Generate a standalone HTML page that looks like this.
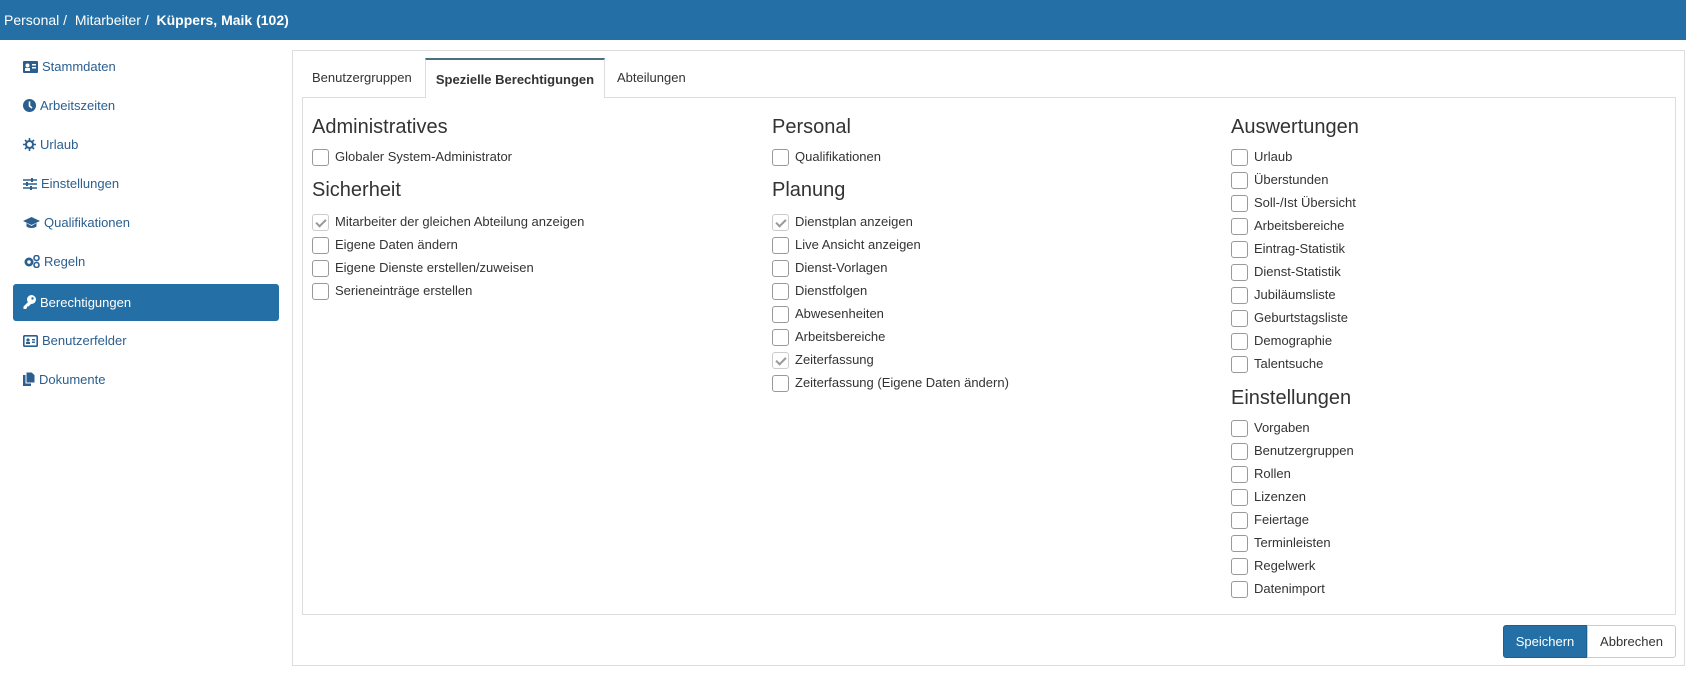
<!DOCTYPE html>
<html><head><meta charset="utf-8"><style>
*{box-sizing:border-box;margin:0;padding:0}
body{width:1686px;height:679px;overflow:hidden;background:#fff;font-family:"Liberation Sans",Arial,sans-serif;font-size:13px;color:#333;position:relative}
.hdr{position:absolute;left:0;top:0;width:1686px;height:40px;background:#2470a6;color:#fff;font-size:14px;line-height:40px;padding-left:4px}
.hdr b{font-weight:bold}
.nav{position:absolute;left:13px;width:266px;height:37px;line-height:37px;padding-left:10px;color:#2a5f8f;font-size:13px}
.nav.act{background:#2470a6;color:#fff;border-radius:3px}
.nav svg{vertical-align:-2px;margin-right:4px}
.outer{position:absolute;left:292px;top:50px;width:1393px;height:616px;border:1px solid #ddd}
.tabline{position:absolute;left:302px;top:97px;width:1374px;height:518px;border:1px solid #ddd}
.tab{position:absolute;top:58px;height:40px;line-height:40px;font-size:13px;color:#333}
.tab.act{background:#fff;border:1px solid #ddd;border-top:2px solid #4a7080;border-bottom:none;font-weight:bold;color:#333;text-align:center}
h3{position:absolute;font-size:20px;font-weight:normal;color:#333;line-height:24px}
.cb{position:absolute;height:18px;line-height:18px;white-space:nowrap}
.cb i{position:absolute;left:0;top:1px;width:17px;height:17px;border:1px solid #999;border-radius:3px;background:#fff}
.cb i.c{border-color:#ccc}
.cb i.c:after{content:"";position:absolute;left:5px;top:2px;width:4px;height:8px;border:solid #999;border-width:0 2px 2px 0;transform:rotate(45deg)}
.cb span{position:absolute;left:23px;top:0}
.btn{position:absolute;top:625px;height:33px;line-height:31px;text-align:center;font-size:13px;border-radius:3px}
</style></head><body>
<div class="hdr">Personal / &nbsp;Mitarbeiter / &nbsp;<b>Küppers, Maik (102)</b></div>

<div class="nav" style="top:48px"><svg width="15" height="12" viewBox="0 0 15 12"><rect x="0" y="0" width="15" height="12" rx="1" fill="#2a5f8f"/><circle cx="4.5" cy="4.5" r="2" fill="#fff"/><rect x="2" y="7" width="5" height="3" fill="#fff"/><rect x="9" y="3" width="4" height="1.5" fill="#fff"/><rect x="9" y="6" width="4" height="1.5" fill="#fff"/></svg>Stammdaten</div>
<div class="nav" style="top:87px"><svg width="13" height="13" viewBox="0 0 13 13"><circle cx="6.5" cy="6.5" r="6.5" fill="#2a5f8f"/><path d="M6.5 2.5v4.5l2.5 2" stroke="#fff" stroke-width="1.6" fill="none"/></svg>Arbeitszeiten</div>
<div class="nav" style="top:126px"><svg width="13" height="13" viewBox="0 0 13 13"><circle cx="6.5" cy="6.5" r="3.5" fill="none" stroke="#2a5f8f" stroke-width="2"/><g stroke="#2a5f8f" stroke-width="1.6"><path d="M6.5 0v2.5M6.5 10.5V13M0 6.5h2.5M10.5 6.5H13M2 2l1.8 1.8M9.2 9.2L11 11M2 11l1.8-1.8M9.2 3.8L11 2"/></g></svg>Urlaub</div>
<div class="nav" style="top:165px"><svg width="14" height="12" viewBox="0 0 14 12"><g stroke="#2a5f8f" stroke-width="1.6"><path d="M0 2h14M0 6h14M0 10h14"/><path d="M9 0v4M4 4v4M8 8v4" stroke-width="2"/></g></svg>Einstellungen</div>
<div class="nav" style="top:204px"><svg width="17" height="12" viewBox="0 0 17 12"><path d="M8.5 0L17 4 8.5 8 0 4z" fill="#2a5f8f"/><path d="M3.5 6v3.5c2 2 8 2 10 0V6L8.5 9z" fill="#2a5f8f"/></svg>Qualifikationen</div>
<div class="nav" style="top:243px"><svg width="17" height="13" viewBox="0 0 17 13"><circle cx="6" cy="7" r="4.5" fill="#2a5f8f"/><circle cx="6" cy="7" r="1.8" fill="#fff"/><circle cx="13.5" cy="3" r="2.5" fill="none" stroke="#2a5f8f" stroke-width="1.6"/><circle cx="13.5" cy="10" r="2.5" fill="none" stroke="#2a5f8f" stroke-width="1.6"/></svg>Regeln</div>
<div class="nav act" style="top:284px"><svg width="13" height="14" viewBox="0 0 13 14"><circle cx="8.5" cy="4.5" r="4.5" fill="#fff"/><path d="M6 6L0.5 11.5V14h2.5l1-1v-1.5h1.5L9 8z" fill="#fff"/><circle cx="9.5" cy="3.5" r="1.2" fill="#2470a6"/></svg>Berechtigungen</div>
<div class="nav" style="top:322px"><svg width="15" height="12" viewBox="0 0 15 12"><rect x="0.8" y="0.8" width="13.4" height="10.4" rx="1" fill="none" stroke="#2a5f8f" stroke-width="1.6"/><circle cx="5" cy="5" r="1.6" fill="#2a5f8f"/><rect x="3" y="7" width="4" height="2" fill="#2a5f8f"/><rect x="9" y="4" width="3" height="1.4" fill="#2a5f8f"/><rect x="9" y="6.5" width="3" height="1.4" fill="#2a5f8f"/></svg>Benutzerfelder</div>
<div class="nav" style="top:361px"><svg width="12" height="14" viewBox="0 0 12 14"><rect x="0" y="3" width="8" height="11" fill="#2a5f8f"/><path d="M3 0h6l3 3v8H3z" fill="#2a5f8f" stroke="#fff" stroke-width="1"/></svg>Dokumente</div>

<div class="outer"></div>
<div class="tabline"></div>
<div class="tab" style="left:312px">Benutzergruppen</div>
<div class="tab act" style="left:425px;width:180px">Spezielle Berechtigungen</div>
<div class="tab" style="left:617px">Abteilungen</div>

<h3 style="left:312px;top:115px">Administratives</h3>
<div class="cb" style="left:312px;top:148px"><i></i><span>Globaler System-Administrator</span></div>
<h3 style="left:312px;top:178px">Sicherheit</h3>
<div class="cb" style="left:312px;top:213px"><i class="c"></i><span>Mitarbeiter der gleichen Abteilung anzeigen</span></div>
<div class="cb" style="left:312px;top:236px"><i></i><span>Eigene Daten ändern</span></div>
<div class="cb" style="left:312px;top:259px"><i></i><span>Eigene Dienste erstellen/zuweisen</span></div>
<div class="cb" style="left:312px;top:282px"><i></i><span>Serieneinträge erstellen</span></div>

<h3 style="left:772px;top:115px">Personal</h3>
<div class="cb" style="left:772px;top:148px"><i></i><span>Qualifikationen</span></div>
<h3 style="left:772px;top:178px">Planung</h3>
<div class="cb" style="left:772px;top:213px"><i class="c"></i><span>Dienstplan anzeigen</span></div>
<div class="cb" style="left:772px;top:236px"><i></i><span>Live Ansicht anzeigen</span></div>
<div class="cb" style="left:772px;top:259px"><i></i><span>Dienst-Vorlagen</span></div>
<div class="cb" style="left:772px;top:282px"><i></i><span>Dienstfolgen</span></div>
<div class="cb" style="left:772px;top:305px"><i></i><span>Abwesenheiten</span></div>
<div class="cb" style="left:772px;top:328px"><i></i><span>Arbeitsbereiche</span></div>
<div class="cb" style="left:772px;top:351px"><i class="c"></i><span>Zeiterfassung</span></div>
<div class="cb" style="left:772px;top:374px"><i></i><span>Zeiterfassung (Eigene Daten ändern)</span></div>

<h3 style="left:1231px;top:115px">Auswertungen</h3>
<div class="cb" style="left:1231px;top:148px"><i></i><span>Urlaub</span></div>
<div class="cb" style="left:1231px;top:171px"><i></i><span>Überstunden</span></div>
<div class="cb" style="left:1231px;top:194px"><i></i><span>Soll-/Ist Übersicht</span></div>
<div class="cb" style="left:1231px;top:217px"><i></i><span>Arbeitsbereiche</span></div>
<div class="cb" style="left:1231px;top:240px"><i></i><span>Eintrag-Statistik</span></div>
<div class="cb" style="left:1231px;top:263px"><i></i><span>Dienst-Statistik</span></div>
<div class="cb" style="left:1231px;top:286px"><i></i><span>Jubiläumsliste</span></div>
<div class="cb" style="left:1231px;top:309px"><i></i><span>Geburtstagsliste</span></div>
<div class="cb" style="left:1231px;top:332px"><i></i><span>Demographie</span></div>
<div class="cb" style="left:1231px;top:355px"><i></i><span>Talentsuche</span></div>
<h3 style="left:1231px;top:386px">Einstellungen</h3>
<div class="cb" style="left:1231px;top:419px"><i></i><span>Vorgaben</span></div>
<div class="cb" style="left:1231px;top:442px"><i></i><span>Benutzergruppen</span></div>
<div class="cb" style="left:1231px;top:465px"><i></i><span>Rollen</span></div>
<div class="cb" style="left:1231px;top:488px"><i></i><span>Lizenzen</span></div>
<div class="cb" style="left:1231px;top:511px"><i></i><span>Feiertage</span></div>
<div class="cb" style="left:1231px;top:534px"><i></i><span>Terminleisten</span></div>
<div class="cb" style="left:1231px;top:557px"><i></i><span>Regelwerk</span></div>
<div class="cb" style="left:1231px;top:580px"><i></i><span>Datenimport</span></div>

<div class="btn" style="left:1503px;width:84px;background:#2470a6;color:#fff;border:1px solid #1f5f8e;border-radius:3px 0 0 3px">Speichern</div>
<div class="btn" style="left:1587px;width:89px;background:#fff;color:#333;border:1px solid #ccc;border-radius:0 3px 3px 0">Abbrechen</div>
</body></html>
